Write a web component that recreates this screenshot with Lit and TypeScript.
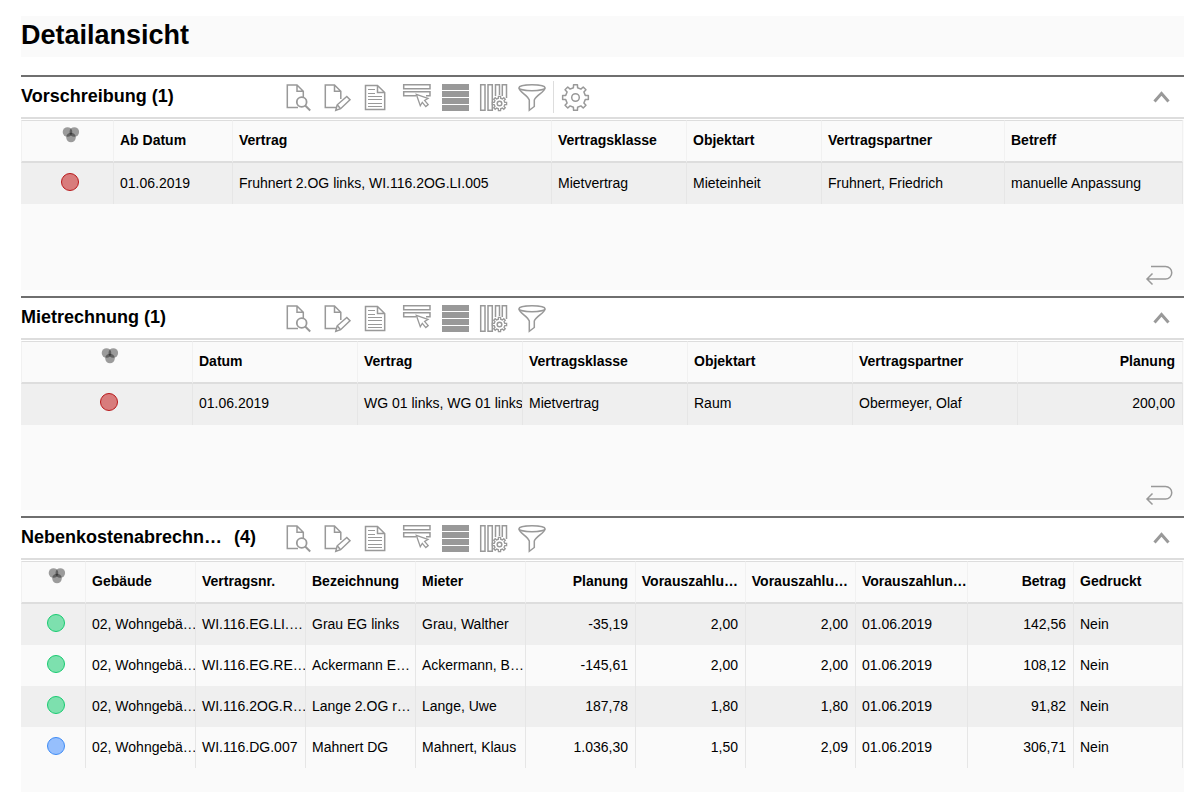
import { LitElement, html, css, svg, nothing } from "lit";
import { customElement, property, state } from "lit/decorators.js";

type Align = "left" | "right";
interface Column { label: string; width: number; align?: Align; }
interface Row { status: "red" | "green" | "blue"; cells: string[]; }
interface Panel {
  title: string;
  count: number;
  settings?: boolean;
  last?: boolean;
  statusWidth: number;
  columns: Column[];
  rows: Row[];
}

const gearPath = (cx: number, cy: number, r: number, depth: number, teeth: number) => {
  const pts: string[] = [];
  const step = (Math.PI * 2) / teeth;
  const at = (rad: number, a: number) =>
    `${(cx + rad * Math.sin(a)).toFixed(2)} ${(cy - rad * Math.cos(a)).toFixed(2)}`;
  for (let i = 0; i < teeth; i++) {
    const a = i * step;
    pts.push(at(r, a - step * 0.19), at(r, a + step * 0.19), at(r - depth, a + step * 0.27), at(r - depth, a + step * 0.73));
  }
  return `M${pts.join("L")}Z`;
};

/* Toolbar drawings share a 38 x 32 box, one per button. */
const tools: { name: string; art: unknown }[] = [
  {
    name: "Anzeigen",
    art: svg`<path d="M14 26.500H3.300V4H13l6.300 6.300V16M13 4v6.300h6.300"/><circle cx="17.700" cy="21" r="4.900" fill="#fff" stroke-width="1.800"/><path d="M21.200 24.500l5 5" stroke-width="2"/>`,
  },
  {
    name: "Bearbeiten",
    art: svg`<path d="M14 26.500H3.300V4H12.500l6.300 6.300V18M12.500 4v6.300h6.300M18.800 24v2.500"/><path d="M13.800 29.300l1.400-5.500 9.600-8.300 3.200 3.300-9.400 8.900z" fill="#fff"/><path d="M15.200 23.800l3.400 3.900"/>`,
  },
  {
    name: "Bericht",
    art: svg`<path d="M5.500 4.500h12l7.200 7v17H5.500zM17.500 4.500v7h7.200"/><path d="M8 8.500h7M8 12.500h7M8 15.500h14M8 18.500h14M8 22.500h14M8 25.500h14" stroke-width="1"/>`,
  },
  {
    name: "Auswahl",
    art: svg`<path d="M5.700 3.700H32v4H5.700zM18 14.700H5.700v-4H32v4h-4"/><path d="M18.300 13.300l11.700 4.200-3.400 1.900 3.600 4.200-2.400 2-3.500-4.300-2 3.500z" fill="#fff" stroke-width="1.300"/>`,
  },
  {
    name: "Zeilen",
    art: svg`<path d="M6 3h27v6H6zM6 10h27v6H6zM6 17h27v6H6zM6 24h27v6H6z" fill="#999" stroke="none"/>`,
  },
  {
    name: "Spalten",
    art: svg`<path d="M6.700 3.700h4.300v25.600H6.700zM14 3.700h4.300v25.600H14zM21.500 15V3.700h4V14M28.300 15V3.700h4.200V17"/><path d="${gearPath(25.5, 22.5, 7.2, 1.8, 8)}" fill="#fff" stroke-width="1.300"/><circle cx="25.500" cy="22.500" r="2.300"/>`,
  },
  {
    name: "Filter",
    art: svg`<path d="M7 6.700c0 4.300 8.600 7.300 10.300 12.300v10.300l5-3.800V19c2-5 10.700-8 10.700-12.300"/><ellipse cx="20" cy="6.700" rx="13" ry="3"/>`,
  },
];

const panels: Panel[] = [
  {
    title: "Vorschreibung", count: 1, settings: true, statusWidth: 93,
    columns: [
      { label: "Ab Datum", width: 119 }, { label: "Vertrag", width: 319 },
      { label: "Vertragsklasse", width: 135 }, { label: "Objektart", width: 135 },
      { label: "Vertragspartner", width: 183 }, { label: "Betreff", width: 178 },
    ],
    rows: [{ status: "red", cells: ["01.06.2019", "Fruhnert 2.OG links, WI.116.2OG.LI.005", "Mietvertrag", "Mieteinheit", "Fruhnert, Friedrich", "manuelle Anpassung"] }],
  },
  {
    title: "Mietrechnung", count: 1, statusWidth: 172,
    columns: [
      { label: "Datum", width: 165 }, { label: "Vertrag", width: 165 },
      { label: "Vertragsklasse", width: 165 }, { label: "Objektart", width: 165 },
      { label: "Vertragspartner", width: 165 }, { label: "Planung", width: 165, align: "right" },
    ],
    rows: [{ status: "red", cells: ["01.06.2019", "WG 01 links, WG 01 links", "Mietvertrag", "Raum", "Obermeyer, Olaf", "200,00"] }],
  },
  {
    title: "Nebenkostenabrechn…", count: 4, last: true, statusWidth: 65,
    columns: [
      { label: "Gebäude", width: 110 }, { label: "Vertragsnr.", width: 110 },
      { label: "Bezeichnung", width: 110 }, { label: "Mieter", width: 110 },
      { label: "Planung", width: 110, align: "right" },
      { label: "Vorauszahlu…", width: 110, align: "right" },
      { label: "Vorauszahlu…", width: 110, align: "right" },
      { label: "Vorauszahlun…", width: 112 },
      { label: "Betrag", width: 106, align: "right" },
      { label: "Gedruckt", width: 109 },
    ],
    rows: [
      { status: "green", cells: ["02, Wohngebä…", "WI.116.EG.LI.…", "Grau EG links", "Grau, Walther", "-35,19", "2,00", "2,00", "01.06.2019", "142,56", "Nein"] },
      { status: "green", cells: ["02, Wohngebä…", "WI.116.EG.RE…", "Ackermann E…", "Ackermann, B…", "-145,61", "2,00", "2,00", "01.06.2019", "108,12", "Nein"] },
      { status: "green", cells: ["02, Wohngebä…", "WI.116.2OG.R…", "Lange 2.OG r…", "Lange, Uwe", "187,78", "1,80", "1,80", "01.06.2019", "91,82", "Nein"] },
      { status: "blue", cells: ["02, Wohngebä…", "WI.116.DG.007", "Mahnert DG", "Mahnert, Klaus", "1.036,30", "1,50", "2,09", "01.06.2019", "306,71", "Nein"] },
    ],
  },
];

@customElement("data-panel")
export class DataPanel extends LitElement {
  @property({ attribute: false }) panel!: Panel;
  @state() private open = true;

  static styles = css`
    :host { display: flex; flex-direction: column; }
    .head {
      display: flex; align-items: center; height: 40px;
      border-top: 2px solid #6f6f6f; border-bottom: 2px solid #ddd;
    }
    .title {
      display: flex; gap: 5px; flex: none; width: 263px; margin: 0; padding-bottom: 2px;
      font-size: 18px; line-height: 24px; font-weight: bold; white-space: nowrap;
    }
    .wide { flex: 0 0 208px; }
    .tools { display: flex; flex: 1; }
    button { padding: 0; border: 0; background: none; cursor: pointer; display: block; }
    svg { display: block; fill: none; stroke: #999; stroke-width: 1.5px; }
    .settings { border-left: 1px solid #ddd; margin-left: 3px; }
    .toggle { margin-right: 14px; }
    .toggle.closed svg { transform: rotate(180deg); }
    .body {
      flex: 1; display: flex; flex-direction: column; justify-content: space-between;
      background: #fafafa; margin-bottom: 6px; border-top: 1px solid #fff;
    }
    .body.last { margin-bottom: 0; padding-bottom: 24px; }
    table { width: calc(100% - 1px); table-layout: fixed; border-collapse: separate; border-spacing: 0; }
    th, td {
      box-sizing: border-box; height: 41px; padding: 0 0 2px 6px; border-right: 1px solid #e6e6e6;
      font-size: 14px; line-height: 20px; text-align: left;
      white-space: nowrap; overflow: hidden;
    }
    th { height: 43px; border-right-color: #f1f1f1; border-top: 1px solid #ddd; border-bottom: 2px solid #ddd; }
    .right { text-align: right; padding-left: 4px; padding-right: 7px; }
    tbody tr:nth-child(odd) { background: #efefef; }
    th.mark { padding: 0 0 12px 6px; border-left: 1px solid #f1f1f1; }
    td.mark { padding: 0 0 4px 5px; }
    .mark svg { margin: 0 auto; }
    .dot { box-sizing: border-box; width: 18px; height: 18px; margin: 0 auto; border: 1px solid; border-radius: 50%; }
    .red { background: #d87c7c; border-color: #b8191b; }
    .green { background: #7de0ae; border-color: #17cb70; }
    .blue { background: #96bffd; border-color: #3e8bf5; }
    .back { align-self: flex-end; margin: 0 11px 4px 0; }
  `;

  render() {
    const p = this.panel;
    return html`
      <header class="head">
        <h2 class="title"><span class=${p.last ? "wide" : ""}>${p.title}</span><span>(${p.count})</span></h2>
        <div class="tools">
          ${tools.map((t) => html`<button type="button" aria-label=${t.name}><svg width="38" height="32" viewBox="0 0 38 32">${t.art}</svg></button>`)}
          ${p.settings
            ? html`<button class="settings" type="button" aria-label="Einstellungen">
                <svg width="38" height="32" viewBox="0 0 38 32">
                  <path d=${gearPath(21.5, 16.5, 13, 3, 8)} stroke-linejoin="round" /><circle cx="21.5" cy="16.5" r="3.8" />
                </svg></button>`
            : nothing}
        </div>
        <button class="toggle ${this.open ? "" : "closed"}" type="button" aria-label="Bereich umschalten"
          aria-expanded=${this.open} @click=${() => (this.open = !this.open)}>
          <svg width="17" height="14" viewBox="0 0 17 14"><path d="M1.500 11.500l7-8 7 8" stroke-width="3" style="stroke-width:3" /></svg>
        </button>
      </header>
      ${this.open ? this.renderBody(p) : nothing}
    `;
  }

  private renderBody(p: Panel) {
    return html`
      <div class="body ${p.last ? "last" : ""}">
        <table>
          <colgroup>
            <col style="width:${p.statusWidth}px" />
            ${p.columns.map((c) => html`<col style="width:${c.width}px" />`)}
          </colgroup>
          <thead>
            <tr>
              <th class="mark" aria-label="Status">
                <svg width="18" height="18" viewBox="0 0 18 18">
                  <g fill="#000" fill-opacity="0.38" stroke="none">
                    <circle cx="5.500" cy="6" r="4.800" /><circle cx="12.300" cy="6" r="4.800" /><circle cx="9" cy="11.500" r="4.800" />
                  </g>
                </svg>
              </th>
              ${p.columns.map((c) => html`<th class=${c.align ?? "left"}>${c.label}</th>`)}
            </tr>
          </thead>
          <tbody>
            ${p.rows.map((r) => html`
              <tr>
                <td class="mark"><div class="dot ${r.status}"></div></td>
                ${r.cells.map((v, i) => html`<td class=${p.columns[i].align ?? "left"}>${v}</td>`)}
              </tr>`)}
          </tbody>
        </table>
        ${p.last ? nothing : html`
          <button class="back" type="button" aria-label="Zurück">
            <svg width="28" height="22" viewBox="0 0 28 22"><path d="M6 2.500h14.500a6.250 6.250 0 0 1 0 12.500H2M7.500 9.500L2 15l5.500 5.500" /></svg>
          </button>`}
      </div>`;
  }
}

@customElement("app-root")
export class AppRoot extends LitElement {
  static styles = css`
    :host {
      display: block; background: #fff; color: #000;
      font-family: "Liberation Sans", Arial, sans-serif;
    }
    .page {
      box-sizing: border-box; min-height: 100vh; padding: 16px 18px 0 21px;
      display: flex; flex-direction: column;
    }
    .heading { margin: 0 0 18px; background: #fafafa; font-size: 27px; line-height: 37px; padding: 1px 0 3px; }
    .grow { flex: 1 0 auto; }
  `;

  render() {
    return html`
      <main class="page">
        <h1 class="heading">Detailansicht</h1>
        ${panels.map((p) => html`<data-panel class=${p.last ? "" : "grow"} .panel=${p}></data-panel>`)}
      </main>`;
  }
}
